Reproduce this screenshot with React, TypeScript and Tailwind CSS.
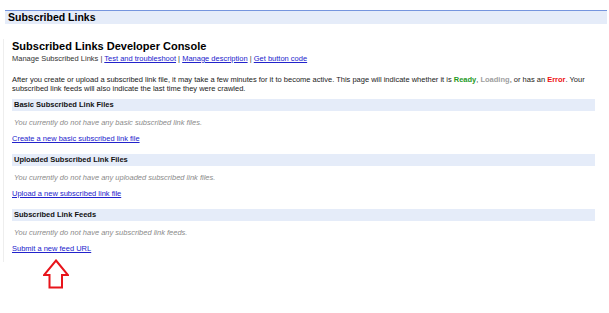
const sections = [
  {
    title: "Basic Subscribed Link Files",
    empty: "You currently do not have any basic subscribed link files.",
    link: "Create a new basic subscribed link file",
  },
  {
    title: "Uploaded Subscribed Link Files",
    empty: "You currently do not have any uploaded subscribed link files.",
    link: "Upload a new subscribed link file",
  },
  {
    title: "Subscribed Link Feeds",
    empty: "You currently do not have any subscribed link feeds.",
    link: "Submit a new feed URL",
  },
];

const Section = ({ title, empty, link }: { title: string; empty: string; link: string }) => {
  return (
    <div className="flex flex-col">
      {/* Section bar */}
      <div className="h-[12px] bg-[#e5ecf9] pl-[2px] text-[7.5px] font-bold leading-[12px] text-[#111]">
        {title}
      </div>
      <div className="mt-[6.5px] pl-[2px] text-[7.5px] italic leading-[9px] text-[#8a8a8a]">
        {empty}
      </div>
      <a
        href="#"
        className="mt-[7.5px] self-start text-[7.5px] leading-[9px] text-[#2222cc] underline"
      >
        {link}
      </a>
    </div>
  );
};

export default function App() {
  return (
    <div className="flex h-[313px] w-[609px] flex-col overflow-hidden bg-white font-['Liberation_Sans',Arial,sans-serif] text-[#222]">
      {/* Page header */}
      <div className="ml-[5px] mr-[2px] mt-[10px] h-[14px] border-t border-[#7595de] bg-[#e5ecf9] pl-[3px] text-[10.5px] font-bold leading-[13px] text-black">
        Subscribed Links
      </div>

      {/* Console */}
      <div className="ml-[3px] mt-[15px] flex w-[592px] flex-col border-l border-[#eeeeee] pb-[9px] pl-[8px]">
        <h1 className="mt-[1px] text-[11px] font-bold leading-[12px] text-black">
          Subscribed Links Developer Console
        </h1>
        <div className="mt-[1.5px] text-[7.5px] leading-[9px] text-[#333]">
          Manage Subscribed Links |{" "}
          <a href="#" className="text-[#2222cc] underline">Test and troubleshoot</a> |{" "}
          <a href="#" className="text-[#2222cc] underline">Manage description</a> |{" "}
          <a href="#" className="text-[#2222cc] underline">Get button code</a>
        </div>

        <p className="mt-[12px] text-[7.5px] leading-[9px] text-[#222]">
          After you create or upload a subscribed link file, it may take a few minutes for it to
          become active. This page will indicate whether it is{" "}
          <span className="font-bold text-[#1e9a1e]">Ready</span>,{" "}
          <span className="font-bold text-[#a0a0a0]">Loading</span>, or has an{" "}
          <span className="font-bold text-[#ee1111]">Error</span>. Your subscribed link feeds will
          also indicate the last time they were crawled.
        </p>

        <div className="mt-[6.5px] flex flex-col gap-[11px]">
          {sections.map((s) => (
            <Section key={s.title} {...s} />
          ))}
        </div>
      </div>

      {/* Red arrow pointing at the feed link */}
      <svg
        width="26"
        height="30"
        viewBox="0 0 26 30"
        className="-mt-[3px] ml-[43px]"
      >
        <polygon
          points="13,1.5 25,16 19,16 19,28.5 6.5,28.5 6.5,16 1,16"
          fill="#fff"
          stroke="#e8141b"
          strokeWidth="2"
          strokeLinejoin="miter"
        />
      </svg>
    </div>
  );
}
